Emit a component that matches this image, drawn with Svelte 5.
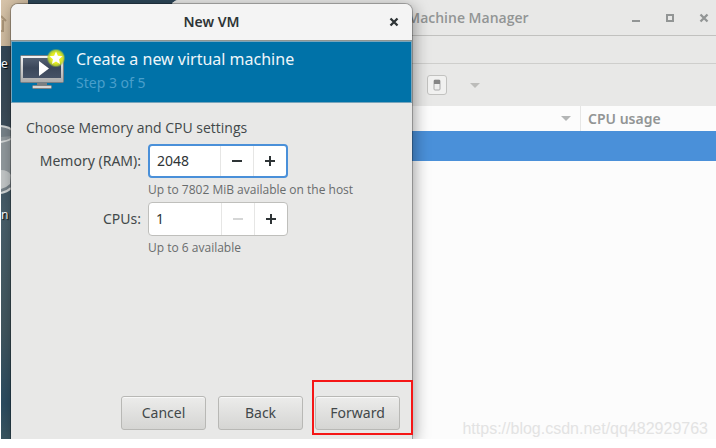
<script lang="ts">
  let memory = $state(2048);
  let cpus = $state(1);

  const maxMemory = 7802;
  const maxCpus = 6;
  const memoryStep = 1;

  const stepMemory = (direction: number): void => {
    memory = Math.min(maxMemory, Math.max(memoryStep, memory + direction * memoryStep));
  };

  const stepCpus = (direction: number): void => {
    cpus = Math.min(maxCpus, Math.max(1, cpus + direction));
  };
</script>

{#snippet minus()}
  <svg width="12" height="12" viewBox="0 0 12 12" aria-hidden="true">
    <path d="M1 6h10" stroke="currentColor" stroke-width="2" />
  </svg>
{/snippet}

{#snippet plus()}
  <svg width="12" height="12" viewBox="0 0 12 12" aria-hidden="true">
    <path d="M1 6h10M6 1v10" stroke="currentColor" stroke-width="2" />
  </svg>
{/snippet}

{#snippet cross()}
  <svg width="10" height="10" viewBox="0 0 10 10" aria-hidden="true">
    <path d="M1.5 1.5l7 7M8.5 1.5l-7 7" stroke="currentColor" stroke-width="2.3" />
  </svg>
{/snippet}

<main class="desktop">
  <div class="icon home">
    <svg width="27" height="46" viewBox="0 0 27 46" aria-hidden="true">
      <defs>
        <linearGradient id="folder" x1="0" y1="0" x2="1" y2="1">
          <stop offset="0" stop-color="#d8c5ab" />
          <stop offset="1" stop-color="#c6b194" />
        </linearGradient>
      </defs>
      <path d="M0 0h27v43q0 3-3 3H0z" fill="url(#folder)" />
      <path d="M0 16l5 5M2 20v11H0" fill="none" stroke="#ab967a" stroke-width="2" />
    </svg>
    <span class="icon-label">e</span>
  </div>
  <div class="icon trash">
    <svg width="14" height="72" viewBox="0 0 14 72" aria-hidden="true">
      <path d="M0 4q9 1 13 6L10 66q-4 4-10 5z" fill="#78838a" />
      <path d="M0 15l11-1-2 46-9 5z" fill="#929a9e" />
      <path d="M0 48q7 0 10 5l-1 9q-4 4-9 5z" fill="#c4c8c9" />
      <path d="M0 4q9 1 12 5M0 20q7-1 12-4M0 71q6-1 10-5" fill="none" stroke="#d5d8d8" stroke-width="2" />
    </svg>
    <span class="icon-label">n</span>
  </div>

  <section class="window manager" aria-label="Virtual Machine Manager">
    <header class="manager-title">
      <h1>Virtual Machine Manager</h1>
      <div class="controls">
        <button type="button" aria-label="Minimize">
          <svg width="10" height="10" viewBox="0 0 10 10" aria-hidden="true">
            <path d="M1 8h8" stroke="currentColor" stroke-width="2" />
          </svg>
        </button>
        <button type="button" aria-label="Maximize">
          <svg width="10" height="10" viewBox="0 0 10 10" aria-hidden="true">
            <path d="M2 2h6v6H2z" fill="none" stroke="currentColor" stroke-width="2" />
          </svg>
        </button>
        <button type="button" aria-label="Close">{@render cross()}</button>
      </div>
    </header>
    <div class="menubar"></div>
    <div class="toolbar">
      <button type="button" class="shutdown" aria-label="Shut down">
        <svg width="8" height="12" viewBox="0 0 8 12" aria-hidden="true">
          <rect x="1" y="1" width="6" height="10" rx="1" fill="#eeeeed" stroke="#aaa" />
          <path d="M1 1h6v4H1z" fill="#858585" />
        </svg>
      </button>
      <button type="button" class="shutdown-menu" aria-label="Shut down options">
        <svg width="10" height="5" viewBox="0 0 10 5" aria-hidden="true">
          <path d="M0 0h10L5 5z" fill="currentColor" />
        </svg>
      </button>
    </div>
    <table>
      <thead>
        <tr>
          <th class="name" aria-label="Name">
            <svg width="10" height="5" viewBox="0 0 10 5" aria-hidden="true">
              <path d="M0 0h10L5 5z" fill="currentColor" />
            </svg>
          </th>
          <th class="usage">CPU usage</th>
        </tr>
      </thead>
      <tbody>
        <tr class="selected"><td></td><td></td></tr>
      </tbody>
    </table>
  </section>

  <section class="window dialog" role="dialog" aria-labelledby="dialog-title">
    <header class="dialog-title">
      <h2 id="dialog-title">New VM</h2>
      <button type="button" aria-label="Close dialog">{@render cross()}</button>
    </header>

    <div class="banner">
      <svg width="46" height="44" viewBox="0 0 46 44" aria-hidden="true">
        <defs>
          <linearGradient id="frame" x1="0" y1="0" x2="0" y2="1">
            <stop offset="0" stop-color="#f4f4f4" />
            <stop offset="1" stop-color="#aaa" />
          </linearGradient>
          <linearGradient id="screen" x1="0" y1="0" x2="0" y2="1">
            <stop offset="0" stop-color="#536072" />
            <stop offset="0.5" stop-color="#3b475a" />
            <stop offset="1" stop-color="#465266" />
          </linearGradient>
          <radialGradient id="glow">
            <stop offset="0.55" stop-color="#e4ed20" />
            <stop offset="0.8" stop-color="#c2d62c" stop-opacity="0.85" />
            <stop offset="1" stop-color="#7eb84c" stop-opacity="0" />
          </radialGradient>
        </defs>
        <path d="M17 33h10v4H17z" fill="#7b7e80" />
        <rect x="12.5" y="36.5" width="19" height="3" rx="1" fill="#d5d5d5" stroke="#818181" />
        <rect x="0.5" y="6.5" width="43" height="27" rx="1" fill="url(#frame)" stroke="#777f85" />
        <rect x="3" y="9" width="38" height="20" fill="url(#screen)" />
        <path d="M19 12v15l10-7.5z" fill="#fff" />
        <circle cx="36" cy="9" r="9.5" fill="url(#glow)" />
        <path d="M36 2.500l1.900 4.200 4.600.5-3.400 3.100.9 4.600-4-2.300-4 2.300.9-4.600-3.400-3.100 4.600-.5z" fill="#fff" />
      </svg>
      <div>
        <p class="headline">Create a new virtual machine</p>
        <p class="step">Step 3 of 5</p>
      </div>
    </div>

    <form onsubmit={(event) => event.preventDefault()}>
      <p class="intro">Choose Memory and CPU settings</p>
      <div class="fields">
        <label for="memory">Memory (RAM):</label>
        <div class="spin active">
          <input id="memory" type="text" inputmode="numeric" bind:value={memory} />
          <button type="button" aria-label="Decrease memory" onclick={() => stepMemory(-1)}>{@render minus()}</button>
          <button type="button" aria-label="Increase memory" onclick={() => stepMemory(1)}>{@render plus()}</button>
        </div>
        <p class="hint">Up to {maxMemory} MiB available on the host</p>

        <label for="cpus">CPUs:</label>
        <div class="spin">
          <input id="cpus" type="text" inputmode="numeric" bind:value={cpus} />
          <button type="button" aria-label="Decrease CPUs" disabled={cpus <= 1} onclick={() => stepCpus(-1)}>{@render minus()}</button>
          <button type="button" aria-label="Increase CPUs" disabled={cpus >= maxCpus} onclick={() => stepCpus(1)}>{@render plus()}</button>
        </div>
        <p class="hint">Up to {maxCpus} available</p>
      </div>

      <footer>
        <button type="button">Cancel</button>
        <button type="button">Back</button>
        <div class="marked">
          <button type="submit">Forward</button>
        </div>
      </footer>
    </form>
  </section>

  <span class="watermark">https://blog.csdn.net/qq482929763</span>
</main>

<style>
  :global(body) {
    margin: 0;
    background: #fff;
  }

  .desktop {
    position: relative;
    min-height: calc(100vh - 9px);
    margin: 0 0 9px 1px;
    overflow: hidden;
    background: linear-gradient(#2d4658, #3b4b58 25%, #49606c 50%, #42575f 75%, #2c4d62 92%, #3b5661);
    color: #2e3436;
    font-family: "Noto Sans", "Open Sans", sans-serif;
    font-size: 14px;
    line-height: 20px;
  }

  h1,
  h2,
  p {
    margin: 0;
    font-size: inherit;
  }

  button,
  input {
    margin: 0;
    padding: 0;
    border: 0;
    background: none;
    color: inherit;
    font: inherit;
  }

  svg {
    display: block;
  }

  .icon {
    position: absolute;
    left: 0;
    display: flex;
    flex-direction: column;
    gap: 8px;
  }

  .home {
    top: 0;
  }

  .trash {
    top: 122px;
    gap: 11px;
  }

  .icon-label {
    color: #fff;
    font-size: 12px;
    text-shadow: 1px 1px 1px #000;
  }

  .window {
    position: absolute;
    bottom: 0;
    display: flex;
    flex-direction: column;
  }

  .manager {
    top: 0;
    left: 170px;
    right: 0;
    overflow: hidden;
    border-radius: 8px 0 0 0;
    background: #fcfcfc;
    color: #929595;
  }

  .manager-title {
    display: grid;
    grid-template-columns: 1fr auto 1fr;
    align-items: center;
    height: 35px;
    border-bottom: 1px solid #c1c1bf;
    background: #e8e8e7;
  }

  .manager-title h1 {
    grid-column: 2;
    font-family: "Open Sans", sans-serif;
    font-weight: 600;
  }

  .controls {
    display: flex;
    justify-content: flex-end;
    gap: 24px;
    padding-right: 7px;
  }

  .menubar {
    height: 27px;
    border-bottom: 1px solid #cececc;
    background: #e8e8e7;
  }

  .toolbar {
    display: flex;
    align-items: center;
    justify-content: flex-end;
    gap: 23px;
    height: 42px;
    padding-right: 236px;
    background: #e8e8e7;
  }

  .shutdown {
    display: grid;
    place-items: center;
    width: 20px;
    height: 20px;
    border: 1px solid #c2c2c0;
    border-radius: 3px;
    background: #f1f1f0;
  }

  .shutdown-menu {
    color: #bcbcba;
  }

  table {
    width: 100%;
    border-collapse: collapse;
    table-layout: fixed;
  }

  th {
    height: 25px;
    padding: 0;
    font-weight: 600;
    line-height: 18px;
    text-align: left;
  }

  .name svg {
    margin-left: auto;
    margin-right: 9px;
    color: #b4b6b6;
  }

  .usage {
    width: 128px;
    padding-left: 7px;
    border-left: 1px solid #e6e6e5;
  }

  .selected td {
    height: 30px;
    padding: 0;
    background: #4a90d9;
  }

  .dialog {
    top: 4px;
    left: 10px;
    width: 401px;
    border-radius: 7px 7px 0 0;
    background: #e8e8e7;
    box-shadow: 0 0 0 1px rgba(0, 0, 0, 0.25), 2px 3px 16px rgba(0, 0, 0, 0.4);
  }

  .dialog-title {
    display: grid;
    grid-template-columns: 1fr auto 1fr;
    align-items: center;
    height: 36px;
    border-bottom: 1px solid #929590;
    border-radius: 7px 7px 0 0;
    background: #f4f4f4;
  }

  .dialog-title h2 {
    grid-column: 2;
    font-weight: 600;
  }

  .dialog-title button {
    justify-self: end;
    margin-right: 13px;
  }

  .banner {
    display: flex;
    gap: 10px;
    height: 60px;
    padding-left: 8px;
    border: 1px solid #78a5bc;
    background: #0072a8;
  }

  .banner svg {
    margin-top: 7px;
  }

  .headline {
    margin-top: 5px;
    color: #eef6fa;
    font-size: 16px;
    line-height: 24px;
  }

  .step {
    color: #499fcb;
    line-height: 24px;
  }

  form {
    display: flex;
    flex: 1;
    flex-direction: column;
    padding: 15px 12px 9px 15px;
  }

  .intro {
    color: #42484a;
    font-family: "Open Sans", sans-serif;
  }

  .fields {
    display: grid;
    grid-template-columns: 115px 1fr;
    column-gap: 7px;
    align-items: center;
    margin-top: 6px;
  }

  .fields label {
    color: #42484a;
    text-align: right;
  }

  .spin {
    display: flex;
    box-sizing: border-box;
    width: 140px;
    height: 34px;
    border: 1px solid #bfbfbc;
    border-radius: 4px;
    background: #fff;
  }

  .spin.active {
    border: 2px solid #4a90d9;
  }

  .spin input {
    flex: 1;
    min-width: 0;
    padding-left: 7px;
    outline: none;
  }

  .spin button {
    display: grid;
    place-items: center;
    width: 33px;
    border-left: 1px solid #e6e6e5;
  }

  .spin button:disabled {
    color: #d5d6d6;
  }

  .hint {
    grid-column: 2;
    color: #686c6d;
    font-family: "Open Sans", sans-serif;
    font-size: 12px;
    line-height: 24px;
  }

  footer {
    display: flex;
    justify-content: flex-end;
    gap: 12px;
    margin-top: auto;
  }

  footer button {
    width: 85px;
    height: 34px;
    border: 1px solid #b8b8b5;
    border-radius: 3px;
    background: linear-gradient(#ececeb, #d5d5d3);
    box-shadow: inset 0 1px #f8f8f8;
    color: #42484a;
  }

  .marked {
    position: relative;
  }

  .marked::after {
    content: "";
    position: absolute;
    inset: -16px -13px -5px -3px;
    border: 2px solid #f51616;
    pointer-events: none;
  }

  .watermark {
    position: absolute;
    right: 8px;
    bottom: 0;
    color: #e3e3e3;
    font-family: "Liberation Sans", Arial, sans-serif;
    font-size: 16px;
  }
</style>
